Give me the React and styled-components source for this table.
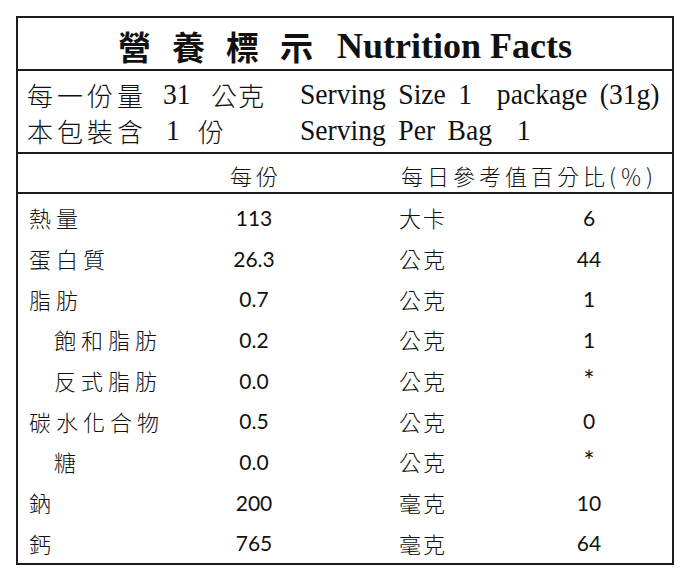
import React from 'react';
import styled, { createGlobalStyle } from 'styled-components';

const GlobalStyle = createGlobalStyle`
  html, body {
    margin: 0;
    padding: 0;
    background: #fff;
    overflow: hidden;
  }
  body {
    font-family: "Noto Sans CJK TC", "Noto Sans", sans-serif;
    color: #111;
  }
`;

const LINE = '#1c1c1c';

const Page = styled.div`
  padding: 16px 0 0 16px;
`;

const LabelBox = styled.div`
  width: 658px;
  box-sizing: border-box;
  border: 2px solid ${LINE};
  display: flex;
  flex-direction: column;
`;

const TitleBar = styled.div`
  height: 53px;
  box-sizing: border-box;
  padding-top: 4px;
  border-bottom: 2px solid ${LINE};
  display: flex;
  align-items: center;
  justify-content: center;
  gap: 24px;
  white-space: nowrap;
`;

const TitleZh = styled.span`
  font-family: "Noto Sans CJK TC", sans-serif;
  font-size: 33px;
  font-weight: 700;
  letter-spacing: 21px;
  margin-right: -21px;
`;

const TitleEn = styled.span`
  font-family: "Liberation Serif", serif;
  font-size: 36px;
  font-weight: 700;
`;

const ServingBlock = styled.div`
  height: 83px;
  box-sizing: border-box;
  border-bottom: 2px solid ${LINE};
  padding-left: 9px;
  display: flex;
  flex-direction: column;
  justify-content: center;
`;

const ServingLine = styled.div`
  display: grid;
  grid-template-columns: 273px 1fr;
  height: 36px;
  align-items: center;
  white-space: nowrap;
`;

const ServingLeft = styled.div`
  display: flex;
  align-items: center;
`;

const Zh = styled.span`
  font-size: 26px;
  font-weight: 300;
  letter-spacing: ${p => p.$spacing ?? 4}px;
  margin-left: ${p => p.$gap ?? 0}px;
`;

const SerifText = styled.span`
  display: inline-block;
  font-family: "Liberation Serif", serif;
  font-size: 30px;
  line-height: 36px;
  word-spacing: 6px;
  transform: scaleX(0.92);
  transform-origin: left center;
  margin-left: ${p => p.$gap ?? 0}px;
`;

const HeaderRow = styled.div`
  display: grid;
  grid-template-columns: 154px 164px 323px;
  height: 40px;
  box-sizing: border-box;
  padding-top: 4px;
  border-bottom: 2px solid ${LINE};
  align-items: center;
  font-size: 22px;
  font-weight: 300;
  letter-spacing: 4px;
`;

const HeadPer = styled.span`
  grid-column: 2;
  text-align: center;
  margin-right: -4px;
`;

const HeadDaily = styled.span`
  grid-column: 3;
  padding-left: 65px;
  white-space: nowrap;
`;

const Rows = styled.div`
  padding-top: 3px;
  display: flex;
  flex-direction: column;
`;

const Row = styled.div`
  display: grid;
  grid-template-columns: 154px 164px 183px 140px;
  height: 40.7px;
  align-items: center;
`;

const Nutrient = styled.span`
  font-size: 22px;
  font-weight: 300;
  letter-spacing: 5px;
  padding-left: ${p => (p.$sub ? 36 : 11)}px;
  white-space: nowrap;
`;

const Amount = styled.span`
  font-family: Lato, "Open Sans", sans-serif;
  font-size: ${p => (p.$star ? 26 : 21)}px;
  line-height: ${p => (p.$star ? '30px' : 'normal')};
  text-align: center;
`;

const Unit = styled.span`
  font-size: 22px;
  font-weight: 300;
  letter-spacing: 2px;
  padding-left: 63px;
  white-space: nowrap;
`;

const rows = [
  { name: '熱量', amount: '113', unit: '大卡', dv: '6' },
  { name: '蛋白質', amount: '26.3', unit: '公克', dv: '44' },
  { name: '脂肪', amount: '0.7', unit: '公克', dv: '1' },
  { name: '飽和脂肪', amount: '0.2', unit: '公克', dv: '1', sub: true },
  { name: '反式脂肪', amount: '0.0', unit: '公克', dv: '*', sub: true },
  { name: '碳水化合物', amount: '0.5', unit: '公克', dv: '0' },
  { name: '糖', amount: '0.0', unit: '公克', dv: '*', sub: true },
  { name: '鈉', amount: '200', unit: '毫克', dv: '10' },
  { name: '鈣', amount: '765', unit: '毫克', dv: '64' },
];

export default function App() {
  return (
    <Page>
      <GlobalStyle />
      <LabelBox>
        <TitleBar>
          <TitleZh>營養標示</TitleZh>
          <TitleEn>Nutrition Facts</TitleEn>
        </TitleBar>

        <ServingBlock>
          <ServingLine>
            <ServingLeft>
              <Zh>每一份量</Zh>
              <SerifText $gap={16}>31</SerifText>
              <Zh $gap={18} $spacing={1}>公克</Zh>
            </ServingLeft>
            <SerifText>Serving Size 1{'\u00a0'} package (31g)</SerifText>
          </ServingLine>
          <ServingLine>
            <ServingLeft>
              <Zh>本包裝含</Zh>
              <SerifText $gap={19}>1</SerifText>
              <Zh $gap={17}>份</Zh>
            </ServingLeft>
            <SerifText>Serving Per Bag{'\u00a0'} 1</SerifText>
          </ServingLine>
        </ServingBlock>

        <HeaderRow>
          <HeadPer>每份</HeadPer>
          <HeadDaily>每日參考值百分比(％)</HeadDaily>
        </HeaderRow>

        <Rows>
          {rows.map(r => (
            <Row key={r.name}>
              <Nutrient $sub={r.sub}>{r.name}</Nutrient>
              <Amount>{r.amount}</Amount>
              <Unit>{r.unit}</Unit>
              <Amount $star={r.dv === '*'}>{r.dv}</Amount>
            </Row>
          ))}
        </Rows>
      </LabelBox>
    </Page>
  );
}
